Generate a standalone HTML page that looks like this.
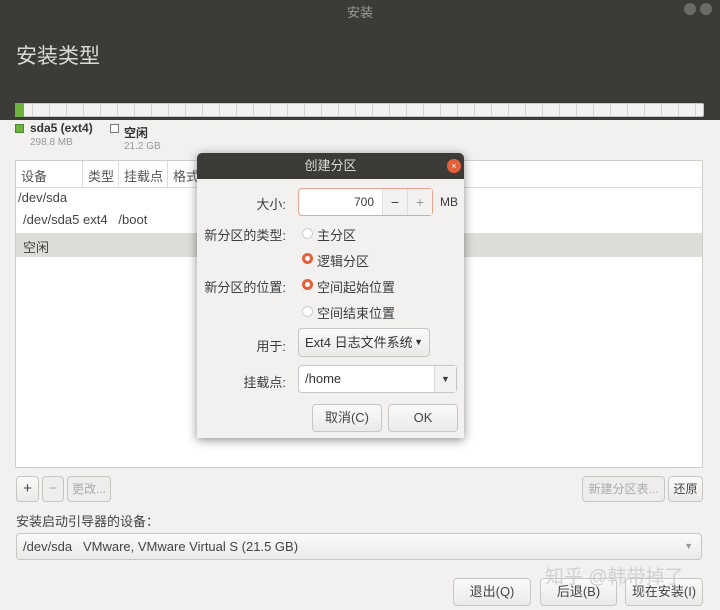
<!DOCTYPE html>
<html><head><meta charset="utf-8"><style>
*{box-sizing:border-box;margin:0;padding:0}
body{width:720px;height:610px;overflow:hidden;background:#f2f1f0;font-family:"Liberation Sans","Noto Sans CJK SC",sans-serif;font-size:13px;color:#3c3c3c;position:relative}
.a{position:absolute}
.btn{position:absolute;border:1px solid #c8c6c2;border-radius:4px;background:linear-gradient(#fafafa,#eceae8);text-align:center;color:#444;font-size:12px}
.dis{color:#aaa;background:#eeedeb}
.radio{position:absolute;width:11px;height:11px;border-radius:50%;border:1px solid #cfcdca;background:#fff}
.radio.on{border:3px solid #e2603a;background:#fff}
</style></head><body>
<div class="a" style="left:0;top:0;width:720px;height:120px;background:#3c3b37"></div>
<div class="a" style="left:0;top:2px;width:720px;text-align:center;color:#9c9a95;font-size:13px">安装</div>
<div class="a" style="left:684px;top:3px;width:12px;height:12px;border-radius:50%;background:#6b6a66"></div>
<div class="a" style="left:700px;top:3px;width:12px;height:12px;border-radius:50%;background:#6b6a66"></div>
<div class="a" style="left:16px;top:40px;color:#dcdad5;font-size:21px">安装类型</div>

<div class="a" style="left:15px;top:103px;width:689px;height:14px;border:1px solid #c6c4c0;background:repeating-linear-gradient(90deg,#f2f2f2 0,#f2f2f2 16px,#d5d3cf 16px,#d5d3cf 17px);border-radius:2px"></div>
<div class="a" style="left:15px;top:103px;width:9px;height:14px;background:#6cb33e"></div>
<div class="a" style="left:15px;top:124px;width:9px;height:9px;background:#6cb33e;border:1px solid #4a8a2a"></div>
<div class="a" style="left:30px;top:121px;font-weight:bold;font-size:12px;color:#333">sda5 (ext4)</div>
<div class="a" style="left:30px;top:137px;font-size:10px;color:#999">298.8 MB</div>
<div class="a" style="left:110px;top:124px;width:9px;height:9px;border:1px solid #777;background:#fff"></div>
<div class="a" style="left:124px;top:124px;font-weight:bold;font-size:12px;color:#333">空闲</div>
<div class="a" style="left:124px;top:141px;font-size:10px;color:#999">21.2 GB</div>

<div class="a" style="left:15px;top:160px;width:688px;height:308px;background:#fff;border:1px solid #d0ceca"></div>
<div class="a" style="left:16px;top:161px;width:686px;height:27px;border-bottom:1px solid #ddd"></div>
<div class="a" style="left:21px;top:166px;color:#555">设备</div>
<div class="a" style="left:82px;top:161px;height:27px;border-left:1px solid #ddd"></div>
<div class="a" style="left:88px;top:166px;color:#555">类型</div>
<div class="a" style="left:118px;top:161px;height:27px;border-left:1px solid #ddd"></div>
<div class="a" style="left:124px;top:166px;color:#555">挂载点</div>
<div class="a" style="left:167px;top:161px;height:27px;border-left:1px solid #ddd"></div>
<div class="a" style="left:173px;top:166px;color:#555">格式</div>
<div class="a" style="left:18px;top:190px;color:#444">/dev/sda</div>
<div class="a" style="left:23px;top:212px;color:#444">/dev/sda5&nbsp;ext4&nbsp;&nbsp;&nbsp;/boot</div>
<div class="a" style="left:16px;top:233px;width:686px;height:24px;background:#dedcd9"></div>
<div class="a" style="left:23px;top:237px;color:#444">空闲</div>

<div class="btn" style="left:16px;top:476px;width:23px;height:26px;line-height:24px;font-size:15px">+</div>
<div class="btn dis" style="left:42px;top:476px;width:22px;height:26px;line-height:24px;font-size:15px">−</div>
<div class="btn dis" style="left:67px;top:476px;width:44px;height:26px;line-height:24px">更改...</div>
<div class="btn dis" style="left:582px;top:476px;width:83px;height:26px;line-height:24px">新建分区表...</div>
<div class="btn" style="left:668px;top:476px;width:35px;height:26px;line-height:24px">还原</div>
<div class="a" style="left:16px;top:511px;color:#444">安装启动引导器的设备：</div>
<div class="btn" style="left:16px;top:533px;width:686px;height:27px;line-height:25px;text-align:left;padding-left:6px;color:#444;font-size:13px">/dev/sda&nbsp;&nbsp;&nbsp;VMware, VMware Virtual S (21.5 GB)<span style="position:absolute;right:8px;font-size:9px;color:#999">▼</span></div>
<div class="btn" style="left:453px;top:578px;width:78px;height:28px;line-height:26px;font-size:13px">退出(Q)</div>
<div class="btn" style="left:540px;top:578px;width:77px;height:28px;line-height:26px;font-size:13px">后退(B)</div>
<div class="btn" style="left:625px;top:578px;width:78px;height:28px;line-height:26px;font-size:13px">现在安装(I)</div>
<div class="a" style="left:545px;top:562px;font-size:19px;color:rgba(200,200,200,.8)">知乎 @韩带掉了</div>

<!-- dialog -->
<div class="a" style="left:197px;top:153px;width:267px;height:285px;background:#f2f1f0;border-radius:5px 5px 0 0;box-shadow:0 2px 10px rgba(0,0,0,.45)"></div>
<div class="a" style="left:197px;top:153px;width:267px;height:26px;background:#3c3b37;border-radius:5px 5px 0 0;color:#dcdad5;text-align:center;line-height:26px;font-size:13px">创建分区</div>
<div class="a" style="left:447px;top:159px;width:14px;height:14px;border-radius:50%;background:#e5603a;color:#fff;font-size:9px;text-align:center;line-height:14px">×</div>
<div class="a" style="left:240px;top:194px;width:46px;text-align:right">大小:</div>
<div class="a" style="left:298px;top:188px;width:135px;height:28px;border:1px solid #e8a48e;border-radius:4px;background:#fff"></div>
<div class="a" style="left:298px;top:195px;width:76px;text-align:right;font-size:12px">700</div>
<div class="a" style="left:382px;top:189px;width:25px;height:26px;border-left:1px solid #ddd;background:#f3f2f0;text-align:center;line-height:26px;font-size:14px">−</div>
<div class="a" style="left:407px;top:189px;width:25px;height:26px;border-left:1px solid #ddd;background:#f3f2f0;text-align:center;line-height:26px;color:#999;font-size:14px">+</div>
<div class="a" style="left:440px;top:195px;font-size:12px">MB</div>
<div class="a" style="left:200px;top:225px;width:86px;text-align:right">新分区的类型:</div>
<div class="radio" style="left:302px;top:228px"></div><div class="a" style="left:317px;top:225px">主分区</div>
<div class="radio on" style="left:302px;top:253px"></div><div class="a" style="left:317px;top:251px">逻辑分区</div>
<div class="a" style="left:200px;top:277px;width:86px;text-align:right">新分区的位置:</div>
<div class="radio on" style="left:302px;top:279px"></div><div class="a" style="left:317px;top:277px">空间起始位置</div>
<div class="radio" style="left:302px;top:306px"></div><div class="a" style="left:317px;top:303px">空间结束位置</div>
<div class="a" style="left:240px;top:336px;width:46px;text-align:right">用于:</div>
<div class="btn" style="left:298px;top:328px;width:132px;height:29px;line-height:27px;text-align:left;padding-left:6px;font-size:13px;color:#333">Ext4 日志文件系统<span style="position:absolute;right:6px;font-size:9px">▼</span></div>
<div class="a" style="left:230px;top:372px;width:56px;text-align:right">挂载点:</div>
<div class="a" style="left:298px;top:365px;width:159px;height:28px;border:1px solid #c8c6c2;border-radius:4px;background:#fff;line-height:26px;padding-left:6px;color:#333">/home</div>
<div class="a" style="left:434px;top:366px;width:22px;height:26px;border-left:1px solid #ddd;background:#f3f2f0;text-align:center;line-height:26px;font-size:9px">▼</div>
<div class="btn" style="left:312px;top:404px;width:70px;height:28px;line-height:26px;font-size:13px">取消(C)</div>
<div class="btn" style="left:388px;top:404px;width:70px;height:28px;line-height:26px;font-size:13px">OK</div>
</body></html>
